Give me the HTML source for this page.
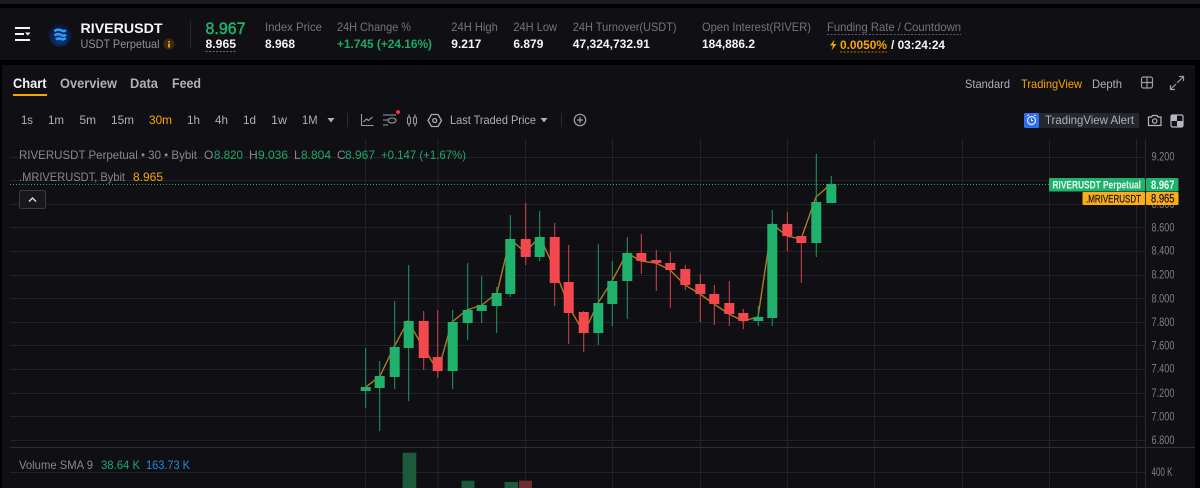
<!DOCTYPE html>
<html><head><meta charset="utf-8"><style>
html,body{margin:0;padding:0;background:#000;width:1200px;height:488px;overflow:hidden}
svg{display:block}
text{font-family:"Liberation Sans",sans-serif;white-space:pre}
.l{font-size:12px;fill:#71757e}
.v{font-size:12px;font-weight:bold;fill:#f4f5f7}
.t{font-size:12px;fill:#adb1b8}
.k{font-size:14px;font-weight:bold;fill:#adb1b8}
.a{font-size:11.5px;fill:#7d7f85}
.g{font-size:12px;fill:#1ea76a}
.d{font-size:12px;fill:#85888e}
</style></head><body>
<svg width="1200" height="488" viewBox="0 0 1200 488" xmlns="http://www.w3.org/2000/svg">
<defs><radialGradient id="lg" cx="50%" cy="65%" r="60%"><stop offset="0" stop-color="#123a8c"/><stop offset="1" stop-color="#0a1230"/></radialGradient></defs>
<rect width="1200" height="488" fill="#000"/>
<rect width="1200" height="4" fill="#1b1c20"/>
<rect y="8" width="1200" height="52" fill="#101014"/>
<rect x="2" y="65" width="1193" height="423" fill="#101014"/>

<!-- header -->
<g stroke="#f4f5f7" stroke-width="2"><path d="M15 28H30M15 34H24M15 40H30"/></g>
<path d="M25 32.500H30.500L27.750 35.500Z" fill="#f4f5f7"/>
<circle cx="60" cy="35" r="11.500" fill="url(#lg)"/>
<path d="M54.500 31.500c2-2.500 5-2 7-1s3.500 .8 4.300-.5M54.500 35.500c2-2 5-1.500 7-.5s3.500 .8 4.300-.5M56 39.500c2-1.500 4-1 5.500-.5s3 .3 4-1.200" stroke="#2b9df4" stroke-width="2.600" fill="none"/>
<text x="80.500" y="33" font-size="14" font-weight="bold" fill="#f4f5f7" textLength="82" lengthAdjust="spacingAndGlyphs">RIVERUSDT</text>
<text x="80.500" y="48" class="t" style="fill:#8f9199" textLength="79" lengthAdjust="spacingAndGlyphs">USDT Perpetual</text>
<circle cx="169" cy="44" r="5.500" fill="#3a2c12"/>
<path d="M169 41v1.500M169 43.500v4" stroke="#f7a600" stroke-width="1.800"/>
<path d="M190.500 20V49" stroke="#26272c"/>
<text x="205.500" y="34" font-size="17" fill="#20b26c" stroke="#20b26c" stroke-width=".5" textLength="40" lengthAdjust="spacingAndGlyphs">8.967</text>
<text x="205.500" y="48" class="v" textLength="30.500" lengthAdjust="spacingAndGlyphs">8.965</text>
<path d="M205.500 51.500H236" stroke="#6b6e75" stroke-dasharray="2 1.500"/>
<text x="265" y="31" class="l" textLength="57" lengthAdjust="spacingAndGlyphs">Index Price</text>
<text x="265" y="48" class="v" textLength="30" lengthAdjust="spacingAndGlyphs">8.968</text>
<text x="337" y="31" class="l" textLength="74" lengthAdjust="spacingAndGlyphs">24H Change %</text>
<text x="337" y="48" font-size="12" font-weight="bold" fill="#1ea76a" textLength="95" lengthAdjust="spacingAndGlyphs">+1.745 (+24.16%)</text>
<text x="451.300" y="31" class="l" textLength="46.500" lengthAdjust="spacingAndGlyphs">24H High</text>
<text x="451.300" y="48" class="v" textLength="30" lengthAdjust="spacingAndGlyphs">9.217</text>
<text x="513.400" y="31" class="l" textLength="43.600" lengthAdjust="spacingAndGlyphs">24H Low</text>
<text x="513.400" y="48" class="v" textLength="30" lengthAdjust="spacingAndGlyphs">6.879</text>
<text x="572.800" y="31" class="l" textLength="103.800" lengthAdjust="spacingAndGlyphs">24H Turnover(USDT)</text>
<text x="572.800" y="48" class="v" textLength="77" lengthAdjust="spacingAndGlyphs">47,324,732.91</text>
<text x="702" y="31" class="l" textLength="109" lengthAdjust="spacingAndGlyphs">Open Interest(RIVER)</text>
<text x="702" y="48" class="v" textLength="53" lengthAdjust="spacingAndGlyphs">184,886.2</text>
<text x="827" y="31" class="l" textLength="134" lengthAdjust="spacingAndGlyphs">Funding Rate / Countdown</text>
<path d="M827 34.500H961" stroke="#5c5f66" stroke-dasharray="2 1.500"/>
<path d="M834.500 39.500L830 45.500H833L831.500 50.500L836.500 44H833.500Z" fill="#f7a600"/>
<text x="840" y="49" font-size="12" font-weight="bold" fill="#f7a600" textLength="47" lengthAdjust="spacingAndGlyphs">0.0050%</text>
<path d="M840 52H887" stroke="#b27a08" stroke-dasharray="2 1.500"/>
<text x="891" y="49" class="v" textLength="54" lengthAdjust="spacingAndGlyphs">/ 03:24:24</text>

<!-- tabs -->
<text x="13" y="88" font-size="14" font-weight="bold" fill="#f4f5f7" textLength="33.500" lengthAdjust="spacingAndGlyphs">Chart</text>
<rect x="13" y="94" width="34" height="2" fill="#f7a600"/>
<text x="60" y="88" class="k" textLength="57" lengthAdjust="spacingAndGlyphs">Overview</text>
<text x="130" y="88" class="k" textLength="28" lengthAdjust="spacingAndGlyphs">Data</text>
<text x="172" y="88" class="k" textLength="29" lengthAdjust="spacingAndGlyphs">Feed</text>
<text x="965" y="88" class="t" textLength="45" lengthAdjust="spacingAndGlyphs">Standard</text>
<text x="1021" y="88" font-size="12" fill="#f7a600" textLength="61" lengthAdjust="spacingAndGlyphs">TradingView</text>
<text x="1092" y="88" class="t" textLength="30" lengthAdjust="spacingAndGlyphs">Depth</text>
<g stroke="#9a9da4" stroke-width="1.200" fill="none">
<rect x="1141.500" y="77" width="11" height="11" rx="2"/><path d="M1147 77V88M1141.500 82.500H1152.500"/>
<path d="M1177 83L1183 77M1179 76.500H1183.500V81M1176 84L1171 89M1170.500 85V89.500H1175"/>
</g>

<!-- interval row -->
<text x="21" y="124" class="t" textLength="12" lengthAdjust="spacingAndGlyphs">1s</text>
<text x="48" y="124" class="t" textLength="16" lengthAdjust="spacingAndGlyphs">1m</text>
<text x="79.500" y="124" class="t" textLength="16.500" lengthAdjust="spacingAndGlyphs">5m</text>
<text x="111" y="124" class="t" textLength="23" lengthAdjust="spacingAndGlyphs">15m</text>
<text x="149" y="124" font-size="12" fill="#f7a600" textLength="23" lengthAdjust="spacingAndGlyphs">30m</text>
<text x="187" y="124" class="t" textLength="13" lengthAdjust="spacingAndGlyphs">1h</text>
<text x="215" y="124" class="t" textLength="13" lengthAdjust="spacingAndGlyphs">4h</text>
<text x="243" y="124" class="t" textLength="13" lengthAdjust="spacingAndGlyphs">1d</text>
<text x="271" y="124" class="t" textLength="16" lengthAdjust="spacingAndGlyphs">1w</text>
<text x="302" y="124" class="t" textLength="15.500" lengthAdjust="spacingAndGlyphs">1M</text>
<path d="M327.500 118H334.500L331 122.500Z" fill="#adb1b8"/>
<path d="M347.500 113V127M561.500 113V127" stroke="#2b2c31"/>
<g stroke="#9a9da4" stroke-width="1.100" fill="none">
<path d="M361.500 114V125.500H373.500M363.500 122L366.500 119L368.500 120.500L372.500 117"/>
<path d="M383 115H396M383 120H388M383 125H388"/><ellipse cx="392" cy="120.500" rx="4" ry="2.500"/>
<rect x="407.500" y="117" width="3" height="7" rx="1.500"/><path d="M409 114.500V117M409 124V126.500"/>
<rect x="413.500" y="117" width="3" height="7" rx="1.500"/><path d="M415 114.500V117M415 124V126.500"/>
</g>
<circle cx="398" cy="112" r="2" fill="#f5333f"/>
<path d="M431.500 114.500H438L441.500 120.500L438 126.500H431.500L428 120.500Z" stroke="#a8abb2" stroke-width="1.300" fill="none"/>
<circle cx="434.700" cy="120.500" r="2" stroke="#a8abb2" stroke-width="1.300" fill="none"/>
<text x="450" y="124" class="t" textLength="86" lengthAdjust="spacingAndGlyphs">Last Traded Price</text>
<path d="M540.500 118H547.500L544 122.500Z" fill="#adb1b8"/>
<circle cx="580" cy="120" r="5.700" stroke="#a0a3aa" stroke-width="1.200" fill="none"/>
<path d="M580 117V123M577 120H583" stroke="#a0a3aa" stroke-width="1.200"/>

<rect x="1024" y="113" width="115" height="15" rx="2" fill="#25272d"/>
<rect x="1024" y="113" width="15" height="15" rx="1.500" fill="#2f6ef0"/>
<circle cx="1031.500" cy="120.500" r="4" stroke="#dfe7fb" stroke-width="1.200" fill="none"/>
<path d="M1027 115.500L1029 115M1036 115.500L1034 115M1031.500 118.500V120.500H1033" stroke="#dfe7fb" stroke-width="1"/>
<text x="1045" y="124" class="t" textLength="89" lengthAdjust="spacingAndGlyphs">TradingView Alert</text>
<g stroke="#b4b7bd" stroke-width="1.200" fill="none">
<path d="M1148.500 117H1151.500L1152.500 115.500H1157L1158 117H1161V125.500H1148.500Z"/><circle cx="1154.700" cy="121" r="2.200"/>
<rect x="1171" y="115" width="12" height="12" rx="1.500"/>
</g>
<path d="M1171.500 115.500H1177V121H1171.500ZM1177 121H1182.500V126.500H1177Z" fill="#b4b7bd"/>

<!-- grid -->
<g stroke="#222327" stroke-width="1" fill="none">
<path d="M10 157.500H1145M10 180.500H1145M10 204.500H1145M10 227.500H1145M10 251.500H1145M10 275.500H1145M10 298.500H1145M10 322.500H1145M10 345.500H1145M10 369.500H1145M10 393.500H1145M10 416.500H1145M10 440.500H1145M10 472.500H1145"/>
<path d="M365.500 139V488M438 139V488M525.500 139V488M612.500 139V488M700.500 139V488M787.500 139V488M874.500 139V488M962.500 139V488M1049.500 139V488M1136.500 139V488"/>
</g>
<path d="M1145.500 139V488" stroke="#2a2b30"/>
<path d="M10 447.500H1195" stroke="#2e2f34"/>

<!-- volume bars -->
<rect x="402.600" y="452.700" width="13.700" height="36" fill="#1c5a3e"/>
<rect x="461.500" y="480.700" width="13" height="8" fill="#1c5a3e"/>
<rect x="504.500" y="482" width="13.500" height="6" fill="#1c5a3e"/>
<rect x="519" y="480.700" width="13" height="8" fill="#6e2a30"/>

<!-- mark price line -->
<polyline fill="none" stroke="#b07a1c" stroke-width="1.400" points="366,387 380,376 394,347 408,321 423,347 438,371 452,322 467,310 482,305 497,293 510,239 525,252 540,237 555,270 569,307 584,333 598,303 612,281 627,253 641,261 656,263 670,270 685,285 700,294 714,304 729,314 743,321 758,317 772,224 787,236 801,239 816,197 831,184"/>

<!-- candles -->
<path stroke="#1c9a60" stroke-width="1" fill="none" d="M365.700 348V408M379.700 361V431M394.700 301V389M408.700 265V401M452.700 310V389M467.700 263V340M481.700 276V323M496.700 287V333M510.300 215V297M539.700 211V261M598.300 244V345M612.300 261V326M627.300 237V319M758.300 306V326M772.300 210V326M816.300 154V257M831.300 176V203"/>
<path stroke="#d9424a" stroke-width="1" fill="none" d="M423.700 311V370M437.700 310V378M525.700 203V265M554.700 223V306M568.700 245V344M583.700 311V352M641.300 234V274M656.300 250V291M670.300 252V308M685.300 265V290M700.300 274V322M714.300 285V325M729.300 281V326M743.300 309V329M787.300 212V251M801.300 236V283"/>
<g fill="#20b26c">
<rect x="360.700" y="387" width="10" height="4"/>
<rect x="374.700" y="376" width="10" height="12"/>
<rect x="389.700" y="347" width="10" height="30"/>
<rect x="403.700" y="321" width="10" height="27"/>
<rect x="447.700" y="322" width="10" height="49"/>
<rect x="462.700" y="310" width="10" height="13"/>
<rect x="476.700" y="305" width="10" height="6"/>
<rect x="491.700" y="293" width="10" height="13"/>
<rect x="505.300" y="239" width="10" height="55"/>
<rect x="534.700" y="237" width="10" height="20"/>
<rect x="593.300" y="303" width="10" height="30"/>
<rect x="607.300" y="281" width="10" height="23"/>
<rect x="622.300" y="253" width="10" height="28"/>
<rect x="753.300" y="317" width="10" height="4"/>
<rect x="767.300" y="224" width="10" height="94"/>
<rect x="811.300" y="202" width="10" height="41"/>
<rect x="826.300" y="184" width="10" height="19"/>
</g>
<g fill="#f4484f">
<rect x="418.700" y="321" width="10" height="37"/>
<rect x="432.700" y="357" width="10" height="14"/>
<rect x="520.700" y="239" width="10" height="18"/>
<rect x="549.700" y="237" width="10" height="46"/>
<rect x="563.700" y="282" width="10" height="31"/>
<rect x="578.700" y="312" width="10" height="21"/>
<rect x="636.300" y="253" width="10" height="8"/>
<rect x="651.300" y="260" width="10" height="3"/>
<rect x="665.300" y="263" width="10" height="7"/>
<rect x="680.300" y="269" width="10" height="16"/>
<rect x="695.300" y="284" width="10" height="10"/>
<rect x="709.300" y="294" width="10" height="10"/>
<rect x="724.300" y="303" width="10" height="11"/>
<rect x="738.300" y="313" width="10" height="8"/>
<rect x="782.300" y="224" width="10" height="12"/>
<rect x="796.300" y="236" width="10" height="7"/>
</g>
<path d="M10 184.500H1049" stroke="#20b26c" stroke-width="1" stroke-dasharray="1 2"/>

<!-- legend -->
<text x="19" y="159" class="d" textLength="178" lengthAdjust="spacingAndGlyphs">RIVERUSDT Perpetual • 30 • Bybit</text>
<text x="204" y="159" class="d">O</text><text x="214" y="159" class="g" textLength="29" lengthAdjust="spacingAndGlyphs">8.820</text>
<text x="249" y="159" class="d">H</text><text x="258" y="159" class="g" textLength="30" lengthAdjust="spacingAndGlyphs">9.036</text>
<text x="294" y="159" class="d">L</text><text x="301" y="159" class="g" textLength="30" lengthAdjust="spacingAndGlyphs">8.804</text>
<text x="337" y="159" class="d">C</text><text x="345" y="159" class="g" textLength="30" lengthAdjust="spacingAndGlyphs">8.967</text>
<text x="381" y="159" class="g" textLength="85" lengthAdjust="spacingAndGlyphs">+0.147 (+1.67%)</text>
<text x="19" y="181" class="d" textLength="106" lengthAdjust="spacingAndGlyphs">.MRIVERUSDT, Bybit</text>
<text x="133" y="181" font-size="12" fill="#f7a600" textLength="30" lengthAdjust="spacingAndGlyphs">8.965</text>
<rect x="19.500" y="190.500" width="26" height="18" rx="2" fill="#17181c" stroke="#3a3b40"/>
<path d="M29 201.500L32.500 198L36 201.500" stroke="#e0e1e4" stroke-width="1.400" fill="none"/>
<text x="19" y="469" class="d" textLength="74" lengthAdjust="spacingAndGlyphs">Volume SMA 9</text>
<text x="101" y="469" class="g" textLength="39" lengthAdjust="spacingAndGlyphs">38.64 K</text>
<text x="146" y="469" font-size="12" fill="#1b8de0" textLength="44" lengthAdjust="spacingAndGlyphs">163.73 K</text>

<!-- axis -->
<text x="1151.500" y="160.700" class="a" textLength="23" lengthAdjust="spacingAndGlyphs">9.200</text>
<text x="1151.500" y="208" class="a" textLength="23" lengthAdjust="spacingAndGlyphs">8.800</text>
<text x="1151.500" y="231.700" class="a" textLength="23" lengthAdjust="spacingAndGlyphs">8.600</text>
<text x="1151.500" y="254.700" class="a" textLength="23" lengthAdjust="spacingAndGlyphs">8.400</text>
<text x="1151.500" y="278.300" class="a" textLength="23" lengthAdjust="spacingAndGlyphs">8.200</text>
<text x="1151.500" y="302.700" class="a" textLength="23" lengthAdjust="spacingAndGlyphs">8.000</text>
<text x="1151.500" y="326" class="a" textLength="23" lengthAdjust="spacingAndGlyphs">7.800</text>
<text x="1151.500" y="349.700" class="a" textLength="23" lengthAdjust="spacingAndGlyphs">7.600</text>
<text x="1151.500" y="372.700" class="a" textLength="23" lengthAdjust="spacingAndGlyphs">7.400</text>
<text x="1151.500" y="397" class="a" textLength="23" lengthAdjust="spacingAndGlyphs">7.200</text>
<text x="1151.500" y="420.700" class="a" textLength="23" lengthAdjust="spacingAndGlyphs">7.000</text>
<text x="1151.500" y="444" class="a" textLength="23" lengthAdjust="spacingAndGlyphs">6.800</text>
<text x="1151.500" y="476" class="a" textLength="21" lengthAdjust="spacingAndGlyphs">400 K</text>

<!-- price tags -->
<rect x="1049" y="178" width="96" height="13.500" rx="1" fill="#20b26c"/>
<rect x="1146" y="178" width="32.500" height="13.500" rx="1" fill="#20b26c"/>
<text x="1052.500" y="188.500" font-size="11" font-weight="bold" fill="#eafaf2" textLength="88.500" lengthAdjust="spacingAndGlyphs">RIVERUSDT Perpetual</text>
<text x="1151" y="189" font-size="11.500" font-weight="bold" fill="#eafaf2" textLength="23.500" lengthAdjust="spacingAndGlyphs">8.967</text>
<rect x="1082.500" y="192" width="62.500" height="13" rx="1" fill="#fbab1c"/>
<rect x="1146" y="192" width="32.500" height="13" rx="1" fill="#fbab1c"/>
<text x="1086" y="202.500" font-size="11" fill="#141417" stroke="#141417" stroke-width=".2" textLength="55" lengthAdjust="spacingAndGlyphs">.MRIVERUSDT</text>
<text x="1151" y="202.500" font-size="11.500" fill="#141417" stroke="#141417" stroke-width=".2" textLength="23.500" lengthAdjust="spacingAndGlyphs">8.965</text>
</svg>
</body></html>
